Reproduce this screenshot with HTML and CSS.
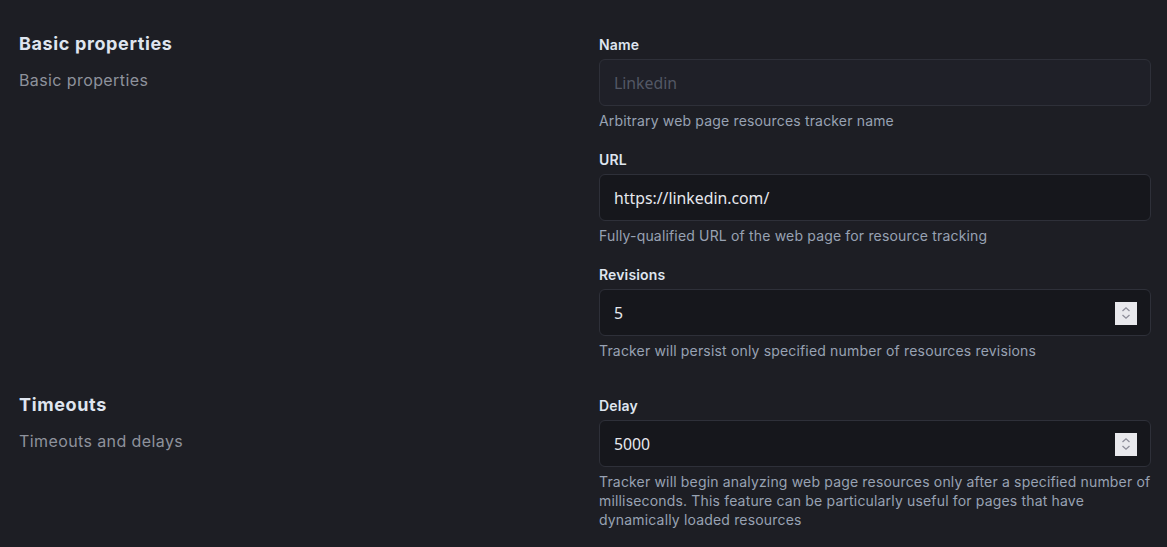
FILE: index.html
```html
<!DOCTYPE html>
<html lang="en">
<head>
<meta charset="utf-8">
<title>Tracker settings</title>
<link rel="stylesheet" href="styles.css">
</head>
<body>
<main class="page">
  <section class="section">
    <div class="section-info">
      <h2 class="section-title">Basic properties</h2>
      <p class="section-desc">Basic properties</p>
    </div>
    <div class="fields">
      <div class="field">
        <label class="label">Name</label>
        <div class="input input-disabled"><span class="placeholder">Linkedin</span></div>
        <div class="help">Arbitrary web page resources tracker name</div>
      </div>
      <div class="field">
        <label class="label">URL</label>
        <div class="input"><span class="value">https://linkedin.com/</span></div>
        <div class="help">Fully-qualified URL of the web page for resource tracking</div>
      </div>
      <div class="field">
        <label class="label">Revisions</label>
        <div class="input"><span class="value">5</span>
          <span class="spinner"><svg width="12" height="16" viewBox="0 0 12 16"><path d="M2.5 6 L6 2.8 L9.5 6" fill="none" stroke="#8e8e9a" stroke-width="1.3"/><path d="M2.5 10 L6 13.2 L9.5 10" fill="none" stroke="#8e8e9a" stroke-width="1.3"/></svg></span>
        </div>
        <div class="help">Tracker will persist only specified number of resources revisions</div>
      </div>
    </div>
  </section>
  <section class="section">
    <div class="section-info">
      <h2 class="section-title">Timeouts</h2>
      <p class="section-desc">Timeouts and delays</p>
    </div>
    <div class="fields">
      <div class="field">
        <label class="label">Delay</label>
        <div class="input"><span class="value">5000</span>
          <span class="spinner"><svg width="12" height="16" viewBox="0 0 12 16"><path d="M2.5 6 L6 2.8 L9.5 6" fill="none" stroke="#8e8e9a" stroke-width="1.3"/><path d="M2.5 10 L6 13.2 L9.5 10" fill="none" stroke="#8e8e9a" stroke-width="1.3"/></svg></span>
        </div>
        <div class="help">Tracker will begin analyzing web page resources only after a specified number of milliseconds. This feature can be particularly useful for pages that have dynamically loaded resources</div>
      </div>
    </div>
  </section>
</main>
</body>
</html>
```

FILE: styles.css
```css
* { box-sizing: border-box; }
html, body { margin: 0; padding: 0; }
body {
  background: #1d1e24;
  font-family: Inter, "Noto Sans", sans-serif;
  font-optical-sizing: none;
  color: #dfe5ef;
  width: 1167px;
  height: 547px;
  overflow: hidden;
}
.page {
  padding: 32px 16px 0 19px;
  display: flex;
  flex-direction: column;
  gap: 33px;
}
.section {
  display: grid;
  grid-template-columns: 1fr 552px;
  column-gap: 16px;
}
.section-title {
  margin: 0;
  font-size: 18px;
  line-height: 24px;
  font-weight: 700;
  letter-spacing: 0.035em;
  color: #dfe5ef;
}
.section-desc {
  margin: 12px 0 0;
  font-size: 16px;
  line-height: 24px;
  letter-spacing: 0.025em;
  color: #8e929c;
}
.fields {
  padding-top: 3px;
  display: flex;
  flex-direction: column;
  gap: 20px;
}
.field {
  display: flex;
  flex-direction: column;
}
.label {
  font-size: 14px;
  line-height: 20px;
  font-weight: 600;
  letter-spacing: 0.01em;
  color: #dfe5ef;
  margin-bottom: 4px;
}
.input {
  height: 47px;
  border: 1px solid #2e3039;
  border-radius: 6px;
  background: #16171c;
  display: flex;
  align-items: center;
  padding: 1px 13px 0 14px;
  font-family: "Noto Sans", sans-serif;
  font-size: 15.8px;
}
.input-disabled {
  background: #1f2028;
}
.placeholder { color: #535865; }
.value { color: #e6e8ee; flex: 1; }
.spinner {
  width: 22px;
  height: 23px;
  background: #e9e9ed;
  display: flex;
  align-items: center;
  justify-content: center;
}
.help {
  margin-top: 5px;
  font-size: 14px;
  line-height: 19px;
  letter-spacing: 0.012em;
  color: #98a2b3;
}
```
